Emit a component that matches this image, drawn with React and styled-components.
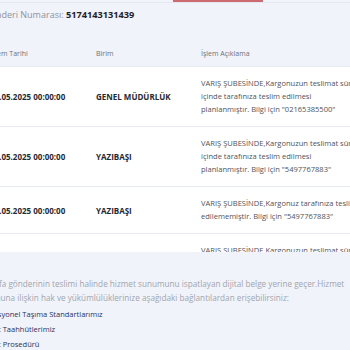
import React from 'react';
import styled, { createGlobalStyle } from 'styled-components';

const Global = createGlobalStyle`
  html, body {
    margin: 0;
    background: #f0f3fa;
    font-family: "Open Sans", "Noto Sans", sans-serif;
  }
`;

const Viewport = styled.div`
  width: 350px;
  height: 350px;
  overflow: hidden;
`;

const Page = styled.div`
  margin-left: -26px;
  width: 600px;
`;

const TabBar = styled.div`
  display: flex;
  height: 2px;
  border-bottom: 1px solid #e4e7ef;
`;

const Tab = styled.div`
  width: ${props => props.w}px;
  border-bottom: 2px solid ${props => props.active ? '#cc6a70' : 'transparent'};
`;

const Heading = styled.div`
  margin-top: 5px;
  padding-left: 10px;
  font-size: 9px;
  line-height: 14px;
  color: #8f929b;
`;

const Value = styled.span`
  font-weight: 700;
  color: #1f222b;
  font-size: 9.2px;
`;

const TableWrap = styled.div`
  margin-top: 18px;
  height: 212px;
  overflow: hidden;
`;

const Row = styled.div`
  display: grid;
  grid-template-columns: 106px 105px 1fr;
  align-items: center;
  background: ${props => props.head ? 'transparent' : '#fff'};
  border-bottom: 1px solid #e8ebf2;
`;

const HeadCell = styled.div`
  padding: 0 0 0 16px;
  height: 26px;
  display: flex;
  align-items: center;
  font-size: 7px;
  color: #6d717c;
`;

const Cell = styled.div`
  padding: 10px 0 10px 16px;
  font-size: 8px;
  font-weight: 700;
  color: #262932;
  white-space: nowrap;
`;

const Desc = styled.div`
  padding: 10px 0 10px 16px;
  font-size: 7.55px;
  line-height: 13px;
  color: #50535d;
  white-space: nowrap;
`;

const Notice = styled.p`
  margin: 25px 0 0;
  font-size: 8.2px;
  line-height: 14px;
  color: #a2a5ae;
  white-space: nowrap;
`;

const Links = styled.ul`
  list-style: none;
  margin: 2px 0 0;
  padding: 0 0 0 2px;
`;

const LinkItem = styled.li`
  font-size: 7.5px;
  line-height: 15px;
  font-weight: 500;
  color: #2b3163;
`;

const rows = [
  { date: '13.05.2025 00:00:00', unit: 'GENEL MÜDÜRLÜK', desc: ['VARIŞ ŞUBESİNDE,Kargonuzun teslimat süresi', 'içinde tarafınıza teslim edilmesi', 'planlanmıştır. Bilgi için "02165385500"'] },
  { date: '13.05.2025 00:00:00', unit: 'YAZIBAŞI', desc: ['VARIŞ ŞUBESİNDE,Kargonuzun teslimat süresi', 'içinde tarafınıza teslim edilmesi', 'planlanmıştır. Bilgi için "5497767883"'] },
  { date: '11.05.2025 00:00:00', unit: 'YAZIBAŞI', desc: ['VARIŞ ŞUBESİNDE,Kargonuz tarafınıza teslim', 'edilememiştir. Bilgi için "5497767883"'] },
  { date: '10.05.2025 00:00:00', unit: 'YAZIBAŞI', desc: ['VARIŞ ŞUBESİNDE,Kargonuzun teslimat süresi', 'içinde tarafınıza teslim edilmesi', 'planlanmıştır. Bilgi için "5497767883"'] },
];

export default function App() {
  return (
    <Viewport>
      <Global />
      <Page>
        <TabBar>
          <Tab w={100} />
          <Tab w={99} />
          <Tab w={90} active />
        </TabBar>
        <Heading>
          Gönderi Numarası: <Value>5174143131439</Value>
        </Heading>
        <TableWrap>
          <Row head>
            <HeadCell>İşlem Tarihi</HeadCell>
            <HeadCell>Birim</HeadCell>
            <HeadCell>İşlem Açıklama</HeadCell>
          </Row>
          {rows.map((r, i) => (
            <Row key={i}>
              <Cell>{r.date}</Cell>
              <Cell>{r.unit}</Cell>
              <Desc>
                {r.desc.map((line, j) => <div key={j}>{line}</div>)}
              </Desc>
            </Row>
          ))}
        </TableWrap>
        <Notice>
          Bu sayfa gönderinin teslimi halinde hizmet sunumunu ispatlayan dijital belge yerine geçer.Hizmet<br />
          sunumuna ilişkin hak ve yükümlülüklerinize aşağıdaki bağlantılardan erişebilirsiniz:
        </Notice>
        <Links>
          <LinkItem>Operasyonel Taşıma Standartlarımız</LinkItem>
          <LinkItem>Hizmet Taahhütlerimiz</LinkItem>
          <LinkItem>Şikayet Prosedürü</LinkItem>
        </Links>
      </Page>
    </Viewport>
  );
}
